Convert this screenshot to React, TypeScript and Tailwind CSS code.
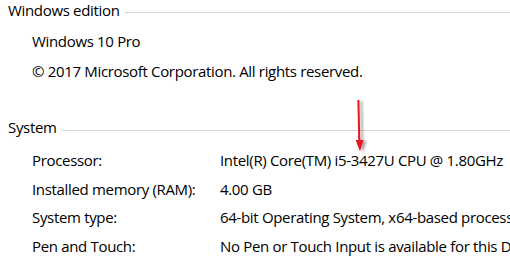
import React from 'react';

const font = { fontFamily: '"Open Sans", "Noto Sans", Arial, sans-serif' };

function Header({ title, lineTop }: { title: string; lineTop: string }) {
    return (
        <div className="flex h-5 items-start pl-2 leading-5">
            <span>{title}</span>
            <div className={`ml-[5px] h-px flex-1 bg-[#d4d4d4] ${lineTop}`} />
        </div>
    );
}

const rows = [
    ['Processor:', 'Intel(R) Core(TM) i5-3427U CPU @ 1.80GHz'],
    ['Installed memory (RAM):', '4.00 GB'],
    ['System type:', '64-bit Operating System, x64-based processor'],
    ['Pen and Touch:', 'No Pen or Touch Input is available for this Display'],
];

export default function App() {
    return (
        <div
            className="relative h-[278px] w-[510px] overflow-hidden bg-white text-[15px] tracking-[-0.33px] text-black"
            style={font}
        >
            <Header title="Windows edition" lineTop="mt-[12px]" />

            <div className="mt-[6px] pl-8 leading-[30px]">
                <div>Windows 10 Pro</div>
                <div>© 2017 Microsoft Corporation. All rights reserved.</div>
            </div>

            <div className="mt-[31px]">
                <Header title="System" lineTop="mt-[13px]" />
            </div>

            <div className="mt-[9px] grid grid-cols-[188px_1fr] pl-8 leading-[28.6px]">
                {rows.map(([label, value]) => (
                    <React.Fragment key={label}>
                        <div className="whitespace-nowrap">{label}</div>
                        <div className="whitespace-nowrap">{value}</div>
                    </React.Fragment>
                ))}
            </div>

            {/* red annotation arrow */}
            <svg className="absolute left-[350px] top-[96px]" width="24" height="62" viewBox="0 0 24 62">
                <defs>
                    <filter id="sh" x="-50%" y="-20%" width="200%" height="140%">
                        <feGaussianBlur in="SourceAlpha" stdDeviation="1.2" />
                        <feOffset dx="3" dy="1" result="b" />
                        <feComponentTransfer>
                            <feFuncA type="linear" slope="0.35" />
                        </feComponentTransfer>
                        <feMerge>
                            <feMergeNode />
                            <feMergeNode in="SourceGraphic" />
                        </feMerge>
                    </filter>
                </defs>
                <g filter="url(#sh)" fill="#e8141c" stroke="none">
                    <path d="M7.4 4 L9.4 4 L10.3 45 L8.3 45 Z" />
                    <path d="M5.6 44 L13.4 44 L10 55.5 Z" />
                </g>
            </svg>
        </div>
    );
}
